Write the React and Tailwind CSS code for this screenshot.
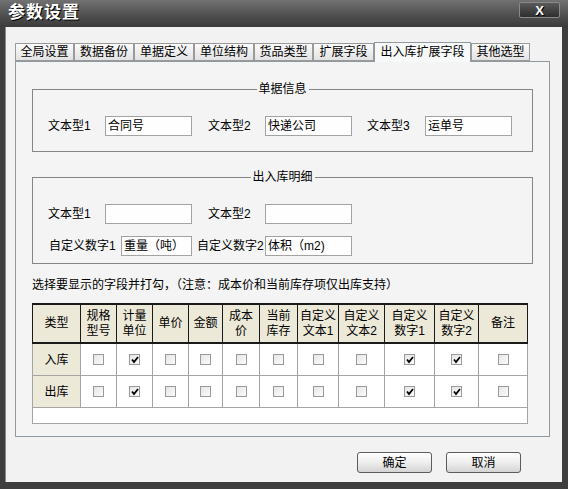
import React from 'react';

const tabs = [
  { label: '全局设置', w: 'w-[59px]' },
  { label: '数据备份', w: 'w-[60px]' },
  { label: '单据定义', w: 'w-[60px]' },
  { label: '单位结构', w: 'w-[60px]' },
  { label: '货品类型', w: 'w-[59px]' },
  { label: '扩展字段', w: 'w-[61px]' },
  { label: '出入库扩展字段', w: 'w-[97px]', active: true },
  { label: '其他选型', w: 'w-[59px]' },
];

// table columns, widths measured from the grid lines
const columns = [
  { lines: ['类型'], w: 'w-[48px]' },
  { lines: ['规格', '型号'], w: 'w-[36px]' },
  { lines: ['计量', '单位'], w: 'w-[36px]' },
  { lines: ['单价'], w: 'w-[36px]' },
  { lines: ['金额'], w: 'w-[34px]' },
  { lines: ['成本', '价'], w: 'w-[37px]' },
  { lines: ['当前', '库存'], w: 'w-[38px]' },
  { lines: ['自定义', '文本1'], w: 'w-[41px]' },
  { lines: ['自定义', '文本2'], w: 'w-[46px]' },
  { lines: ['自定义', '数字1'], w: 'w-[50px]' },
  { lines: ['自定义', '数字2'], w: 'w-[44px]' },
  { lines: ['备注'], w: 'w-[49px]' },
];

const rows = [
  { label: '入库', checked: [2, 9, 10] },
  { label: '出库', checked: [2, 9, 10] },
];

const Field = ({ value = '', w }) => (
  <div className={`${w} h-[20px] border border-[#a3a3a3] bg-[#fefefe] px-[2px] text-[12px] leading-[18px] text-black whitespace-nowrap overflow-hidden`}>
    {value}
  </div>
);

const Label = ({ children, w, cls = '' }) => (
  <div className={`${w} ${cls} text-[12px] leading-[14px] text-black whitespace-nowrap`}>{children}</div>
);

const GroupBox = ({ title, cls, children }) => (
  <div className={`relative mx-[16px] border border-[#858585] ${cls}`}>
    <span className="absolute left-1/2 -translate-x-1/2 -top-[8px] bg-[#f4f4f4] px-[2px] text-[12px] leading-[14px] text-black whitespace-nowrap">
      {title}
    </span>
    {children}
  </div>
);

const CheckBox = ({ checked }) => (
  <span className="flex w-[11px] h-[11px] items-center justify-center border border-[#9a9a9a] bg-linear-to-br from-[#e6e6e6] to-[#fbfbfb]">
    {checked && (
      <svg width="8" height="8" viewBox="0 0 8 8">
        <path d="M1 3.5 L3 6 L7 1" fill="none" stroke="#000" strokeWidth="1.8" />
      </svg>
    )}
  </span>
);

const Button = ({ children }) => (
  <button className="w-[75px] h-[21px] rounded-[3px] border border-[#5c5c5c] bg-linear-to-b from-[#ffffff] via-[#eeeeee] to-[#d4d4d4] text-[12px] leading-[14px] text-black">
    {children}
  </button>
);

export default function App() {
  return (
    <div className="w-[568px] h-[489px] flex flex-col bg-[#3e3e3e] font-['Liberation_Sans','Noto_Sans_CJK_SC',sans-serif] overflow-hidden">
      {/* title bar */}
      <div className="h-[27px] flex justify-between bg-linear-to-b from-[#727272] via-[#535353] to-[#3b3b3b] pl-[8px] pr-[8px]">
        <div className="text-white font-bold text-[17px] leading-[26px] tracking-[1px] [text-shadow:1px_1px_0_#000]">参数设置</div>
        <div className="mt-[2px] w-[41px] h-[16px] rounded-[2px] border border-[#8a8a8a] bg-linear-to-b from-[#5a5a5a] to-[#2e2e2e] flex items-center justify-center">
          <span className="text-white font-bold text-[13px] leading-none [text-shadow:1px_1px_0_#000]">X</span>
        </div>
      </div>

      {/* window body */}
      <div className="flex-1 ml-[5px] mr-[6px] mb-[7px] bg-[#f2f2f2] border-l border-[#8a8a8a] pt-[16px] pl-[9px]">
        {/* tabs */}
        <div className="flex h-[18px] items-end">
          {tabs.map((t) =>
            t.active ? (
              <div
                key={t.label}
                className={`${t.w} h-[20px] -mb-px relative z-10 border border-b-0 border-[#8f9aa0] bg-[#f7f8f8] text-[12px] leading-[18px] text-center text-black`}
              >
                {t.label}
              </div>
            ) : (
              <div
                key={t.label}
                className={`${t.w} h-[18px] border border-[#9a9a9a] bg-linear-to-b from-[#fafafa] to-[#e2e2e2] text-[12px] leading-[16px] text-center text-black`}
              >
                {t.label}
              </div>
            )
          )}
        </div>

        {/* tab panel */}
        <div className="w-[535px] h-[376px] border border-[#8f9aa0] bg-[#f4f4f4]">
          <GroupBox title="单据信息" cls="mt-[27px] h-[63px] pt-[26px]">
            <div className="flex items-center pl-[15px]">
              <Label w="w-[57px]">文本型1</Label>
              <Field w="w-[87px]" value="合同号" />
              <Label w="w-[57px]" cls="ml-[16px]">文本型2</Label>
              <Field w="w-[87px]" value="快递公司" />
              <Label w="w-[58px]" cls="ml-[15px]">文本型3</Label>
              <Field w="w-[87px]" value="运单号" />
            </div>
          </GroupBox>

          <GroupBox title="出入库明细" cls="mt-[25px] h-[87px] pt-[26px]">
            <div className="flex items-center pl-[15px]">
              <Label w="w-[57px]">文本型1</Label>
              <Field w="w-[87px]" />
              <Label w="w-[57px]" cls="ml-[16px]">文本型2</Label>
              <Field w="w-[87px]" />
            </div>
            <div className="flex items-center pl-[16px] mt-[12px]">
              <Label w="w-[72px]">自定义数字1</Label>
              <Field w="w-[71px]" value="重量（吨）" />
              <Label w="w-[68px]" cls="ml-[5px]">自定义数字2</Label>
              <Field w="w-[87px]" value="体积（m2)" />
            </div>
          </GroupBox>

          <div className="mx-[16px] mt-[14px] text-[12px] leading-[14px] text-black whitespace-nowrap">
            选择要显示的字段并打勾，（注意：成本价和当前库存项仅出库支持）
          </div>

          {/* field table */}
          <div className="mx-[16px] mt-[11px] w-[496px]">
            <div className="flex h-[41px] border-t-2 border-b-2 border-l border-[#1a1a1a] bg-[#ece9d8]">
              {columns.map((c, i) => (
                <div
                  key={i}
                  className={`${c.w} shrink-0 border-r border-[#1a1a1a] flex flex-col items-center justify-center text-[12px] leading-[15px] text-black`}
                >
                  {c.lines.map((l) => (
                    <span key={l} className="whitespace-nowrap">{l}</span>
                  ))}
                </div>
              ))}
            </div>
            {rows.map((r) => (
              <div key={r.label} className="flex h-[32px] border-b border-l border-[#a5a5a5] bg-white">
                {columns.map((c, i) =>
                  i === 0 ? (
                    <div
                      key={i}
                      className={`${c.w} shrink-0 border-r border-[#a5a5a5] bg-[#ece9d8] flex items-center justify-center text-[12px] leading-[14px] text-black`}
                    >
                      {r.label}
                    </div>
                  ) : (
                    <div key={i} className={`${c.w} shrink-0 border-r border-[#a5a5a5] flex items-center justify-center`}>
                      <CheckBox checked={r.checked.includes(i)} />
                    </div>
                  )
                )}
              </div>
            ))}
            <div className="h-[16px] border-x border-b border-[#a5a5a5] bg-white" />
          </div>
        </div>

        {/* buttons */}
        <div className="flex justify-end gap-[14px] mt-[15px] pr-[41px]">
          <Button>确定</Button>
          <Button>取消</Button>
        </div>
      </div>
    </div>
  );
}
